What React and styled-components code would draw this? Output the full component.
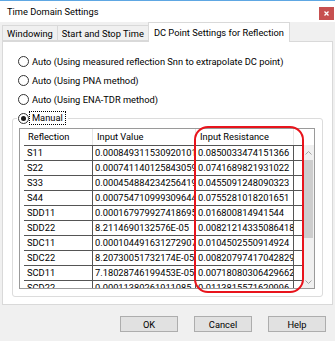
import React from 'react'
import styled, { createGlobalStyle } from 'styled-components'

const GlobalStyle = createGlobalStyle`
    html, body { margin: 0; padding: 0; background: #f0f0f0; }
    body {
        font-family: Roboto, "Noto Sans", sans-serif;
        font-size: 9.3px;
        color: #000;
    }
    * { box-sizing: border-box; }
`

const Window = styled.div`
    width: 335px;
    height: 341px;
    display: flex;
    flex-direction: column;
    background: #f0f0f0;
    border-top: 1px solid #5ea7e3;
    overflow: hidden;
`

const TitleBar = styled.div`
    height: 21px;
    background: #fff;
    display: flex;
    justify-content: space-between;
    align-items: center;
    padding: 0 1px 0 7px;
`

const Title = styled.span`
    font-size: 9.3px;
`

const CloseButton = styled.div`
    align-self: flex-start;
    margin-top: 6px;
    width: 15px;
    height: 13px;
    background: #c75050;
    display: flex;
    align-items: center;
    justify-content: center;
`

const TabStrip = styled.div`
    height: 19px;
    display: flex;
    align-items: flex-end;
    padding-left: 2px;
    position: relative;
    z-index: 1;
`

const Tab = styled.div`
    height: ${ props => props.active ? '20px' : '16px' };
    margin-bottom: ${ props => props.active ? '-1px' : '0' };
    margin-left: -1px;
    padding: 0 ${ props => props.active ? '5px' : '4px' };
    display: flex;
    align-items: center;
    border: 1px solid #d9d9d9;
    border-bottom: ${ props => props.active ? 'none' : '1px solid #d9d9d9' };
    background: ${ props => props.active ? '#fff' : '#f0f0f0' };
    &:first-child { margin-left: 0; }
`

const TabPage = styled.div`
    margin: 0 2px;
    border: 1px solid #d9d9d9;
    background: #fff;
    padding: 10px 0 7px 0;
`

const RadioRow = styled.label`
    height: 19px;
    display: flex;
    align-items: center;
    gap: 3px;
    padding-left: 15px;
`

const RadioCircle = styled.span`
    width: 11px;
    height: 11px;
    border-radius: 50%;
    border: 1px solid #333;
    background: #fff;
    display: flex;
    align-items: center;
    justify-content: center;
    flex-shrink: 0;
    &::after {
        content: '';
        width: 5px;
        height: 5px;
        border-radius: 50%;
        background: ${ props => props.checked ? '#1a1a1a' : 'transparent' };
    }
`

const GroupBox = styled.fieldset`
    margin: 2px 9px 0 9px;
    padding: 3px 7px 7px 6px;
    border: 1px solid #dcdcdc;
    border-radius: 3px;
    min-width: 0;
`

const Legend = styled.legend`
    margin-left: -2px;
    padding: 0 2px 0 1px;
    display: flex;
    align-items: center;
    height: 14px;
`

const FocusLabel = styled.span`
    border: 1px dotted #000;
    padding: 0 2px;
    line-height: 12px;
`

const Grid = styled.div`
    position: relative;
    height: 161px;
    border: 1px solid #9a9a9a;
    background: #fff;
    display: flex;
    flex-direction: column;
`

const columns = '4px 69px 103px 98px 1fr'

const HeaderRow = styled.div`
    display: grid;
    grid-template-columns: ${ columns };
    height: 16px;
`

const HeaderCell = styled.div`
    border-right: 1px solid #e5e5e5;
    padding-left: 4px;
    line-height: 16px;
    white-space: nowrap;
    overflow: hidden;
`

const Body = styled.div`
    flex: 1;
    display: flex;
    min-height: 0;
`

const Rows = styled.div`
    flex: 1;
    overflow: hidden;
    border-top: 1px solid #555;
    margin-left: 4px;
`

const Row = styled.div`
    display: grid;
    grid-template-columns: 69px 103px 98px 1fr;
    height: 15px;
`

const Cell = styled.div`
    border-right: ${ props => props.last ? 'none' : '1px solid #555' };
    border-bottom: 1px solid #555;
    padding-left: ${ props => props.first ? '3px' : '2px' };
    line-height: 14px;
    white-space: nowrap;
    overflow: hidden;
`

const ScrollBar = styled.div`
    width: 12px;
    background: #f0f0f0;
    display: flex;
    flex-direction: column;
    align-items: stretch;
`

const ScrollArrow = styled.div`
    height: ${ props => props.h }px;
    display: flex;
    align-items: center;
    justify-content: center;
`

const Thumb = styled.div`
    height: 78px;
    margin: 0 1px;
    background: #cdcdcd;
`

const Spacer = styled.div`
    flex: 1;
`

const Annotation = styled.div`
    position: absolute;
    left: 174px;
    top: -3px;
    width: 110px;
    height: 167px;
    border: 2px solid #e8141c;
    border-radius: 14px;
    pointer-events: none;
`

const ButtonRow = styled.div`
    display: flex;
    justify-content: flex-end;
    gap: 16px;
    padding: 11px 9px 0 0;
`

const Button = styled.button`
    width: 58px;
    height: 16px;
    padding: 0;
    font: inherit;
    color: #000;
    background: #e1e1e1;
    border: 1px solid #adadad;
`

const rows = [
    ['S11', '0.000849311530920101', '0.0850033474151366'],
    ['S22', '0.000741140125843059', '0.0741689821931022'],
    ['S33', '0.000454884234256419', '0.0455091248090323'],
    ['S44', '0.000754710999309644', '0.0755281018201651'],
    ['SDD11', '0.000167979927418695', '0.016800814941544'],
    ['SDD22', '8.2114690132576E-05', '0.00821214335086418'],
    ['SDC11', '0.000104491631272907', '0.0104502550914924'],
    ['SDC22', '8.20730051732174E-05', '0.00820797417042829'],
    ['SCD11', '7.18028746199453E-05', '0.00718080306429662'],
    ['SCD22', '0.00011380261911085', '0.0113815571620996'],
]

const Chevron = ({ up }) => (
    <svg width="7" height="4" viewBox="0 0 7 4">
        <polyline points={ up ? '0.5,3.5 3.5,0.5 6.5,3.5' : '0.5,0.5 3.5,3.5 6.5,0.5' } fill="none" stroke="#a3a3a3" strokeWidth="1" />
    </svg>
)

const Radio = ({ label }) => (
    <RadioRow>
        <RadioCircle />
        <span>{ label }</span>
    </RadioRow>
)

export default function App() {
    return (
        <Window>
            <GlobalStyle />
            <TitleBar>
                <Title>Time Domain Settings</Title>
                <CloseButton>
                    <svg width="5" height="5" viewBox="0 0 5 5">
                        <path d="M0.5 0.5 L4.5 4.5 M4.5 0.5 L0.5 4.5" stroke="#fff" strokeWidth="1.3" />
                    </svg>
                </CloseButton>
            </TitleBar>
            <TabStrip>
                <Tab>Windowing</Tab>
                <Tab>Start and Stop Time</Tab>
                <Tab active>DC Point Settings for Reflection</Tab>
            </TabStrip>
            <TabPage>
                <Radio label="Auto (Using measured reflection Snn to extrapolate DC point)" />
                <Radio label="Auto (Using PNA method)" />
                <Radio label="Auto (Using ENA-TDR method)" />
                <GroupBox>
                    <Legend>
                        <RadioCircle checked />
                        <FocusLabel>Manual</FocusLabel>
                    </Legend>
                    <Grid>
                        <HeaderRow>
                            <div />
                            <HeaderCell>Reflection</HeaderCell>
                            <HeaderCell>Input Value</HeaderCell>
                            <HeaderCell>Input Resistance</HeaderCell>
                            <div />
                        </HeaderRow>
                        <Body>
                            <Rows>
                                { rows.map(([name, value, resistance]) => (
                                    <Row key={ name }>
                                        <Cell first>{ name }</Cell>
                                        <Cell>{ value }</Cell>
                                        <Cell>{ resistance }</Cell>
                                        <Cell last />
                                    </Row>
                                )) }
                            </Rows>
                            <ScrollBar>
                                <ScrollArrow h={ 15 }><Chevron up /></ScrollArrow>
                                <Thumb />
                                <Spacer />
                                <ScrollArrow h={ 13 }><Chevron /></ScrollArrow>
                            </ScrollBar>
                        </Body>
                        <Annotation />
                    </Grid>
                </GroupBox>
            </TabPage>
            <ButtonRow>
                <Button>OK</Button>
                <Button>Cancel</Button>
                <Button>Help</Button>
            </ButtonRow>
        </Window>
    )
}
